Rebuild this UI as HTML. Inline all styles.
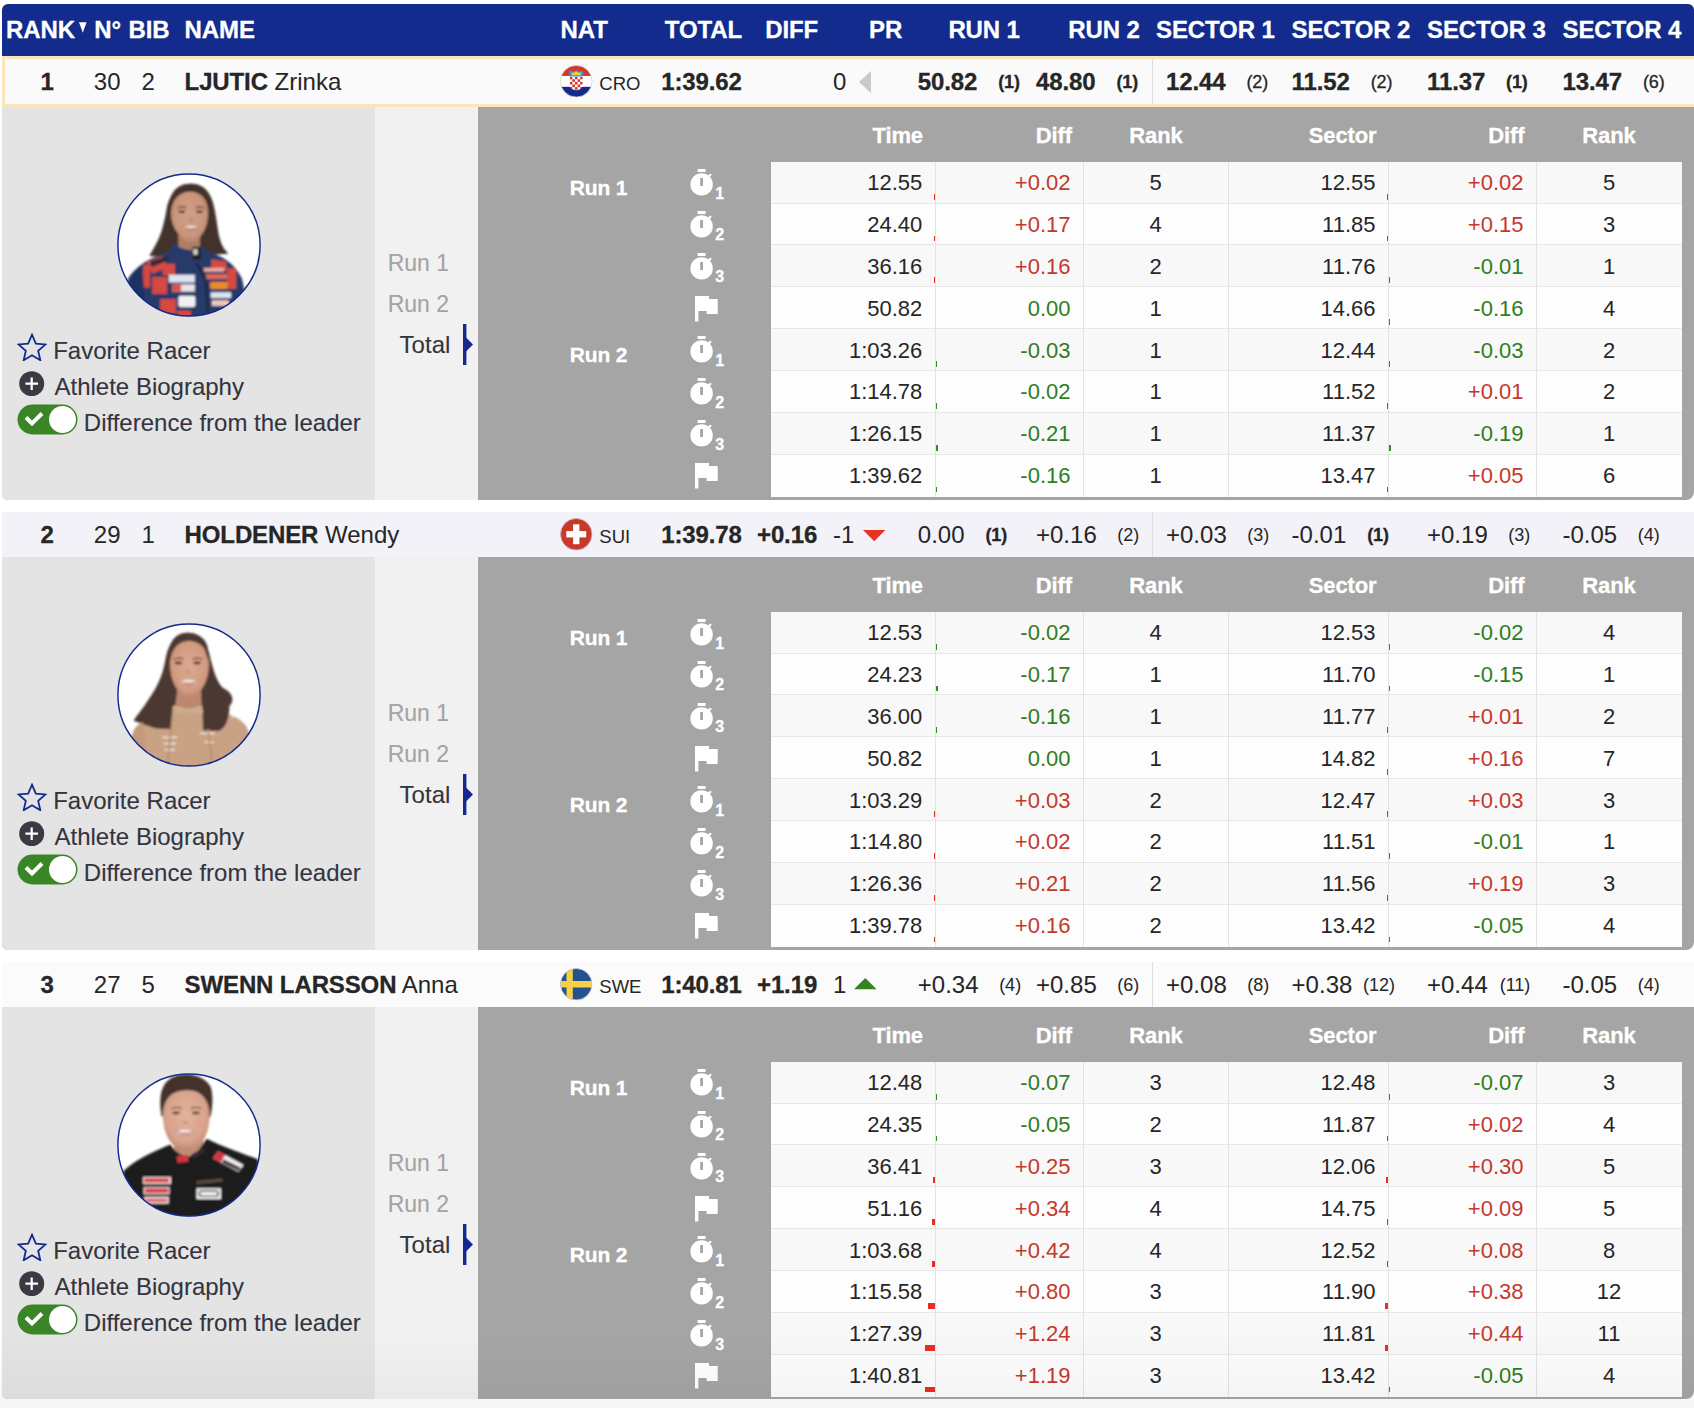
<!DOCTYPE html><html lang="en"><head><meta charset="utf-8"><title>Results</title><style>
html,body{margin:0;padding:0;}
body{width:1694px;height:1408px;overflow:hidden;background:#fff;position:relative;font-family:"Liberation Sans",sans-serif;color:#262626;}
.t{position:absolute;white-space:nowrap;line-height:1;}
.b{font-weight:bold;-webkit-text-stroke:0.3px;letter-spacing:-0.12px;}
.w{color:#fff;}
.abs{position:absolute;}
.hdr{left:2px;top:4px;width:1692px;height:52px;background:#122b8c;border-radius:6px 6px 0 0;}
.row{left:2px;width:1692px;height:45px;}
.row1{background:#fafafa;box-sizing:border-box;border:3px solid #fae6bd;border-right:none;height:51px;}
.row2{background:#f2f2f8;}
.row3{background:#fbfbfb;}
.det{left:2px;width:1692px;height:393px;border-radius:0 0 8px 6px;overflow:hidden;background:#a5a5a5;}
.lp{left:0;top:0;width:373px;height:100%;background:#e4e4e4;}
.mp{left:373px;top:0;width:103px;height:100%;background:#f1f1f1;}
.rk{display:inline-block;width:42.6px;text-align:right;font-size:18px;font-weight:normal;position:relative;top:-1.5px;}
.rk.b{font-weight:bold;-webkit-text-stroke:0.3px;letter-spacing:-0.12px;}
.red{color:#c4392c;}
.grn{color:#2f7d1f;}
.gry{color:#a3a3a3;-webkit-text-stroke:0.1px;}
.lt{color:#34343e;-webkit-text-stroke:0.1px;}
.sep{background:#dcdce0;width:1px;}
.cell{position:absolute;}
</style></head><body>
<div class="abs hdr"></div>
<span class="t b w" style="top:17.78px;font-size:24px;left:6.00px;">RANK</span>
<span class="t b w" style="top:17.78px;font-size:24px;left:94.30px;">N°</span>
<span class="t b w" style="top:17.78px;font-size:24px;left:128.50px;">BIB</span>
<span class="t b w" style="top:17.78px;font-size:24px;left:184.60px;">NAME</span>
<span class="t b w" style="top:17.78px;font-size:24px;left:560.50px;">NAT</span>
<span class="t b w" style="top:17.78px;font-size:24px;left:664.80px;">TOTAL</span>
<span class="t b w" style="top:17.78px;font-size:24px;left:765.20px;">DIFF</span>
<span class="t b w" style="top:17.78px;font-size:24px;left:869.00px;">PR</span>
<span class="t b w" style="top:17.78px;font-size:24px;left:948.40px;">RUN 1</span>
<span class="t b w" style="top:17.78px;font-size:24px;left:1068.30px;">RUN 2</span>
<span class="t b w" style="top:17.78px;font-size:24px;left:1156.00px;">SECTOR 1</span>
<span class="t b w" style="top:17.78px;font-size:24px;left:1291.60px;">SECTOR 2</span>
<span class="t b w" style="top:17.78px;font-size:24px;left:1427.00px;">SECTOR 3</span>
<span class="t b w" style="top:17.78px;font-size:24px;left:1562.50px;">SECTOR 4</span>
<svg class="abs" style="left:79.2px;top:22px" width="7.6" height="11.2" viewBox="0 0 8 11"><path d="M0 0H8L4 11Z" fill="#fff"/></svg>
<div class="abs row row1" style="top:56px"></div>
<span class="t b" style="top:69.58px;font-size:24px;left:-103.00px;width:300px;text-align:center;">1</span>
<span class="t " style="top:69.58px;font-size:24px;left:93.80px;">30</span>
<span class="t " style="top:69.58px;font-size:24px;left:141.50px;">2</span>
<span class="t " style="top:69.58px;font-size:24px;left:184.60px;"><b class="b">LJUTIC</b> Zrinka</span>
<svg class="abs" style="left:560.35px;top:65.1px" width="32.5" height="32.5" viewBox="0 0 32 32"><defs><clipPath id="c0"><circle cx="16" cy="16" r="15.6"/></clipPath><clipPath id="sh0"><path d="M9.6 11.5h12.8v8a6.4 5.4 0 0 1-12.8 0z"/></clipPath></defs><g clip-path="url(#c0)"><rect width="32" height="10.8" fill="#d5352b"/><rect y="10.8" width="32" height="10.7" fill="#fff"/><rect y="21.5" width="32" height="10.5" fill="#14298c"/><path d="M9.6 11.5h12.8v8a6.4 5.4 0 0 1-12.8 0z" fill="#fff"/><g fill="#d5352b" clip-path="url(#sh0)"><rect x="9.60" y="11.50" width="2.56" height="2.56"/><rect x="14.72" y="11.50" width="2.56" height="2.56"/><rect x="19.84" y="11.50" width="2.56" height="2.56"/><rect x="12.16" y="14.06" width="2.56" height="2.56"/><rect x="17.28" y="14.06" width="2.56" height="2.56"/><rect x="9.60" y="16.62" width="2.56" height="2.56"/><rect x="14.72" y="16.62" width="2.56" height="2.56"/><rect x="19.84" y="16.62" width="2.56" height="2.56"/><rect x="12.16" y="19.18" width="2.56" height="2.56"/><rect x="17.28" y="19.18" width="2.56" height="2.56"/><rect x="9.60" y="21.74" width="2.56" height="2.56"/><rect x="14.72" y="21.74" width="2.56" height="2.56"/><rect x="19.84" y="21.74" width="2.56" height="2.56"/><rect x="12.16" y="24.30" width="2.56" height="2.56"/><rect x="17.28" y="24.30" width="2.56" height="2.56"/></g><path d="M8.6 7l2-1.6 2.4 1 3-1.6 3 1.6 2.4-1 2 1.6-1.2 4.2H9.8z" fill="#3f8fd6"/><path d="M11 7.4l2 .3 3-1.2 3 1.2 2-.3-.6 2.6h-8.800z" fill="#f2c935"/></g><circle cx="16" cy="16" r="15.6" fill="none" stroke="#d4d4d4" stroke-width="0.8"/></svg>
<span class="t " style="top:75.44px;font-size:18.5px;left:599.30px;">CRO</span>
<span class="t b" style="top:69.58px;font-size:24px;left:661.20px;">1:39.62</span>
<span class="t " style="top:69.58px;font-size:24px;left:833.00px;">0</span>
<svg class="abs" style="left:859px;top:70.5px" width="12" height="22" viewBox="0 0 12 22"><path d="M12 0V22L0 11Z" fill="#c9c9c9"/></svg>
<span class="t b" style="top:69.58px;font-size:24px;left:917.80px;">50.82<span class="rk b">(1)</span></span>
<span class="t b" style="top:69.58px;font-size:24px;left:1036.00px;">48.80<span class="rk b">(1)</span></span>
<span class="t b" style="top:69.58px;font-size:24px;left:1166.00px;">12.44<span class="rk">(2)</span></span>
<span class="t b" style="top:69.58px;font-size:24px;left:1291.60px;">11.52<span class="rk">(2)</span></span>
<span class="t b" style="top:69.58px;font-size:24px;left:1427.00px;">11.37<span class="rk b">(1)</span></span>
<span class="t b" style="top:69.58px;font-size:24px;left:1562.50px;">13.47<span class="rk">(6)</span></span>
<div class="abs sep" style="left:1152px;top:59.0px;height:45px"></div>
<div class="abs det" style="top:107px;height:393px"><div class="abs lp"></div><div class="abs mp"></div></div>
<svg class="abs" style="left:117px;top:173px" width="144" height="144" viewBox="70 70 1268 1268"><defs><clipPath id="pc1"><circle cx="704" cy="704" r="628"/></clipPath><filter id="pb1" x="-5%" y="-5%" width="110%" height="110%"><feGaussianBlur stdDeviation="9"/></filter><radialGradient id="pf1" cx="0.5" cy="0.45" r="0.6"><stop offset="0" stop-color="#d3a087"/><stop offset="0.7" stop-color="#c8957b"/><stop offset="1" stop-color="#a97760"/></radialGradient></defs><circle cx="704" cy="704" r="630" fill="#fff"/><g clip-path="url(#pc1)"><g filter="url(#pb1)">
<path d="M720 165C600 165 530 260 505 400C480 540 450 640 400 720C380 760 365 780 355 800L560 810L1050 780C1010 740 985 700 965 610C950 520 940 420 915 330C880 220 820 165 720 165Z" fill="#43302a"/>
<path d="M170 1000C250 880 350 820 540 760L560 690C640 720 760 740 800 700L880 770C1000 800 1100 860 1170 1000L1260 1400L80 1400Z" fill="#263a69"/>
<path d="M610 600L800 600L800 730C760 760 660 750 610 720Z" fill="#b07e66"/>
<path d="M545 440C545 300 620 235 715 235C810 235 880 300 872 440C868 540 830 640 720 692C610 640 550 540 545 440Z" fill="url(#pf1)"/>
<path d="M540 380C560 270 640 225 715 222C800 222 870 260 880 370C905 270 860 170 720 165C570 165 525 280 540 380Z" fill="#43302a"/>
<ellipse cx="722" cy="550" rx="60" ry="15" fill="#f1e6e0"/><path d="M650 535C690 560 760 560 795 535C770 590 680 590 650 535Z" fill="#a8645a" opacity="0.6"/>
<ellipse cx="640" cy="412" rx="30" ry="11" fill="#46302a"/><ellipse cx="795" cy="412" rx="30" ry="11" fill="#46302a"/>
<path d="M600 380C620 365 660 365 680 378" stroke="#4a342c" stroke-width="10" fill="none"/><path d="M760 378C780 365 820 365 840 380" stroke="#4a342c" stroke-width="10" fill="none"/>
<ellipse cx="720" cy="480" rx="24" ry="14" fill="#b98268" opacity="0.7"/>
<g fill="#d54a41"><path d="M330 850L470 800L520 900L380 960Z"/><rect x="380" y="985" width="130" height="150"/><rect x="470" y="870" width="110" height="100"/><path d="M900 830L1030 850L1040 930L900 910Z"/><rect x="1040" y="910" width="80" height="180"/><rect x="450" y="1180" width="140" height="130"/><rect x="600" y="1280" width="120" height="60"/><rect x="300" y="880" width="60" height="200"/></g>
<path d="M170 1000C200 950 240 910 290 880L330 1330L100 1340Z" fill="#1f3160"/>
<rect x="735" y="720" width="70" height="110" fill="#1d1d22"/>
<rect x="742" y="740" width="38" height="50" fill="#d9d5cf"/>
<path d="M360 850L510 800L520 840L370 900Z" fill="#2b2f3d"/>
<rect x="525" y="965" width="230" height="70" fill="#dfe3ee"/><rect x="555" y="1050" width="200" height="65" fill="#efe3e6"/><rect x="555" y="1050" width="80" height="65" fill="#d9534c"/><rect x="610" y="1150" width="150" height="100" rx="20" fill="#f1f1f1"/>
<rect x="835" y="905" width="180" height="35" fill="#e8a9a4"/><rect x="855" y="960" width="185" height="45" fill="#e0665c"/><rect x="890" y="1030" width="155" height="62" rx="10" fill="#ea8b2c"/><rect x="895" y="1120" width="180" height="50" fill="#dfe5f3"/><rect x="905" y="1190" width="150" height="50" fill="#f0c9bd"/>
<path d="M770 860L850 1010L870 1300" stroke="#1a2037" stroke-width="16" fill="none"/>
</g></g><circle cx="704" cy="704" r="626" fill="none" stroke="#14298c" stroke-width="13"/></svg>
<svg class="abs" style="left:16.6px;top:333px" width="30" height="28.1" viewBox="0 0 32 30"><path d="M16 1.8l4.1 9.5 10.3 0.9-7.8 6.8 2.3 10.1-8.9-5.3-8.9 5.3 2.3-10.1-7.8-6.8 10.3-0.9z" fill="none" stroke="#14298c" stroke-width="1.9" stroke-linejoin="miter"/></svg>
<span class="t lt" style="top:338.58px;font-size:24px;left:53.20px;">Favorite Racer</span>
<svg class="abs" style="left:19.4px;top:370.5px" width="25.4" height="25.4" viewBox="0 0 25 25"><circle cx="12.5" cy="12.5" r="12.3" fill="#3a3a44"/><path d="M12.5 6.3v12.4M6.3 12.5h12.4" stroke="#fff" stroke-width="2.2"/></svg>
<span class="t lt" style="top:375.08px;font-size:24px;left:54.50px;">Athlete Biography</span>
<svg class="abs" style="left:16.5px;top:403.7px" width="61" height="31" viewBox="0 0 61 31"><rect x="0.5" y="0.5" width="60" height="30" rx="15" fill="#3a8526"/><circle cx="45.5" cy="15.5" r="13.5" fill="#fff"/><path d="M9 13.5l6 6 10-10" fill="none" stroke="#fff" stroke-width="4"/></svg>
<span class="t lt" style="top:411.08px;font-size:24px;left:83.80px;">Difference from the leader</span>
<span class="t gry" style="top:251.73px;font-size:23px;right:1245.00px;">Run 1</span>
<span class="t gry" style="top:292.93px;font-size:23px;right:1245.00px;">Run 2</span>
<span class="t lt" style="top:332.78px;font-size:24px;right:1243.70px;">Total</span>
<svg class="abs" style="left:463px;top:324px" width="11" height="42" viewBox="0 0 11 42"><rect x="0" y="0" width="3.4" height="41" fill="#14298c"/><path d="M3 13.5L10 20.5L3 27.5Z" fill="#14298c"/></svg>
<span class="t b w" style="top:125.38px;font-size:22px;right:771.00px;">Time</span>
<span class="t b w" style="top:125.38px;font-size:22px;right:622.00px;">Diff</span>
<span class="t b w" style="top:125.38px;font-size:22px;left:1006.00px;width:300px;text-align:center;">Rank</span>
<span class="t b w" style="top:125.38px;font-size:22px;right:317.50px;">Sector</span>
<span class="t b w" style="top:125.38px;font-size:22px;right:169.50px;">Diff</span>
<span class="t b w" style="top:125.38px;font-size:22px;left:1459.00px;width:300px;text-align:center;">Rank</span>
<div class="abs" style="left:771px;top:162px;width:911px;height:335px;background:#fdfdfd"></div>
<span class="t b w" style="top:176.62px;font-size:21px;left:569.70px;">Run 1</span>
<span class="t b w" style="top:343.98px;font-size:21px;left:569.70px;">Run 2</span>
<div class="abs" style="left:771px;top:162px;width:911px;height:42px;background:#f8f8f8"></div>
<div class="abs" style="left:771px;top:203px;width:911px;height:1px;background:#e7e7e7"></div>
<svg class="abs" style="left:690px;top:168.90px" width="24" height="30" viewBox="0 0 24 30"><rect x="7.6" y="0" width="8" height="3" fill="#fff"/><circle cx="11.6" cy="15.4" r="11.2" fill="#fff"/><path d="M18.4 8l2.6-2.8" stroke="#fff" stroke-width="2.2"/><rect x="10.2" y="9" width="2.8" height="8" fill="#a5a5a5"/></svg>
<span class="t b w" style="top:185.56px;font-size:16px;left:715.30px;">1</span>
<span class="t " style="top:172.18px;font-size:22px;right:771.70px;">12.55</span>
<span class="t red" style="top:172.18px;font-size:22px;right:623.50px;">+0.02</span>
<span class="t " style="top:172.18px;font-size:22px;left:1005.50px;width:300px;text-align:center;">5</span>
<span class="t " style="top:172.18px;font-size:22px;right:318.50px;">12.55</span>
<span class="t red" style="top:172.18px;font-size:22px;right:170.50px;">+0.02</span>
<span class="t " style="top:172.18px;font-size:22px;left:1459.00px;width:300px;text-align:center;">5</span>
<div class="abs" style="left:771px;top:244px;width:911px;height:1px;background:#e7e7e7"></div>
<svg class="abs" style="left:690px;top:210.74px" width="24" height="30" viewBox="0 0 24 30"><rect x="7.6" y="0" width="8" height="3" fill="#fff"/><circle cx="11.6" cy="15.4" r="11.2" fill="#fff"/><path d="M18.4 8l2.6-2.8" stroke="#fff" stroke-width="2.2"/><rect x="10.2" y="9" width="2.8" height="8" fill="#a5a5a5"/></svg>
<span class="t b w" style="top:227.40px;font-size:16px;left:715.30px;">2</span>
<span class="t " style="top:214.02px;font-size:22px;right:771.70px;">24.40</span>
<span class="t red" style="top:214.02px;font-size:22px;right:623.50px;">+0.17</span>
<span class="t " style="top:214.02px;font-size:22px;left:1005.50px;width:300px;text-align:center;">4</span>
<span class="t " style="top:214.02px;font-size:22px;right:318.50px;">11.85</span>
<span class="t red" style="top:214.02px;font-size:22px;right:170.50px;">+0.15</span>
<span class="t " style="top:214.02px;font-size:22px;left:1459.00px;width:300px;text-align:center;">3</span>
<div class="abs" style="left:771px;top:245px;width:911px;height:42px;background:#f8f8f8"></div>
<div class="abs" style="left:771px;top:286px;width:911px;height:1px;background:#e7e7e7"></div>
<svg class="abs" style="left:690px;top:252.58px" width="24" height="30" viewBox="0 0 24 30"><rect x="7.6" y="0" width="8" height="3" fill="#fff"/><circle cx="11.6" cy="15.4" r="11.2" fill="#fff"/><path d="M18.4 8l2.6-2.8" stroke="#fff" stroke-width="2.2"/><rect x="10.2" y="9" width="2.8" height="8" fill="#a5a5a5"/></svg>
<span class="t b w" style="top:269.24px;font-size:16px;left:715.30px;">3</span>
<span class="t " style="top:255.86px;font-size:22px;right:771.70px;">36.16</span>
<span class="t red" style="top:255.86px;font-size:22px;right:623.50px;">+0.16</span>
<span class="t " style="top:255.86px;font-size:22px;left:1005.50px;width:300px;text-align:center;">2</span>
<span class="t " style="top:255.86px;font-size:22px;right:318.50px;">11.76</span>
<span class="t grn" style="top:255.86px;font-size:22px;right:170.50px;">-0.01</span>
<span class="t " style="top:255.86px;font-size:22px;left:1459.00px;width:300px;text-align:center;">1</span>
<div class="abs" style="left:771px;top:328px;width:911px;height:1px;background:#e7e7e7"></div>
<svg class="abs" style="left:695px;top:296.12px" width="23.2" height="26.1" viewBox="0 0 24 27"><path d="M0 0H14.5V3H23.5V18.5H12V15.5H3.5V26.5H0Z" fill="#fff"/></svg>
<span class="t " style="top:297.70px;font-size:22px;right:771.70px;">50.82</span>
<span class="t grn" style="top:297.70px;font-size:22px;right:623.50px;">0.00</span>
<span class="t " style="top:297.70px;font-size:22px;left:1005.50px;width:300px;text-align:center;">1</span>
<span class="t " style="top:297.70px;font-size:22px;right:318.50px;">14.66</span>
<span class="t grn" style="top:297.70px;font-size:22px;right:170.50px;">-0.16</span>
<span class="t " style="top:297.70px;font-size:22px;left:1459.00px;width:300px;text-align:center;">4</span>
<div class="abs" style="left:771px;top:329px;width:911px;height:42px;background:#f8f8f8"></div>
<div class="abs" style="left:771px;top:370px;width:911px;height:1px;background:#e7e7e7"></div>
<svg class="abs" style="left:690px;top:336.26px" width="24" height="30" viewBox="0 0 24 30"><rect x="7.6" y="0" width="8" height="3" fill="#fff"/><circle cx="11.6" cy="15.4" r="11.2" fill="#fff"/><path d="M18.4 8l2.6-2.8" stroke="#fff" stroke-width="2.2"/><rect x="10.2" y="9" width="2.8" height="8" fill="#a5a5a5"/></svg>
<span class="t b w" style="top:352.92px;font-size:16px;left:715.30px;">1</span>
<span class="t " style="top:339.54px;font-size:22px;right:771.70px;">1:03.26</span>
<span class="t grn" style="top:339.54px;font-size:22px;right:623.50px;">-0.03</span>
<span class="t " style="top:339.54px;font-size:22px;left:1005.50px;width:300px;text-align:center;">1</span>
<span class="t " style="top:339.54px;font-size:22px;right:318.50px;">12.44</span>
<span class="t grn" style="top:339.54px;font-size:22px;right:170.50px;">-0.03</span>
<span class="t " style="top:339.54px;font-size:22px;left:1459.00px;width:300px;text-align:center;">2</span>
<div class="abs" style="left:771px;top:412px;width:911px;height:1px;background:#e7e7e7"></div>
<svg class="abs" style="left:690px;top:378.10px" width="24" height="30" viewBox="0 0 24 30"><rect x="7.6" y="0" width="8" height="3" fill="#fff"/><circle cx="11.6" cy="15.4" r="11.2" fill="#fff"/><path d="M18.4 8l2.6-2.8" stroke="#fff" stroke-width="2.2"/><rect x="10.2" y="9" width="2.8" height="8" fill="#a5a5a5"/></svg>
<span class="t b w" style="top:394.76px;font-size:16px;left:715.30px;">2</span>
<span class="t " style="top:381.38px;font-size:22px;right:771.70px;">1:14.78</span>
<span class="t grn" style="top:381.38px;font-size:22px;right:623.50px;">-0.02</span>
<span class="t " style="top:381.38px;font-size:22px;left:1005.50px;width:300px;text-align:center;">1</span>
<span class="t " style="top:381.38px;font-size:22px;right:318.50px;">11.52</span>
<span class="t red" style="top:381.38px;font-size:22px;right:170.50px;">+0.01</span>
<span class="t " style="top:381.38px;font-size:22px;left:1459.00px;width:300px;text-align:center;">2</span>
<div class="abs" style="left:771px;top:413px;width:911px;height:42px;background:#f8f8f8"></div>
<div class="abs" style="left:771px;top:454px;width:911px;height:1px;background:#e7e7e7"></div>
<svg class="abs" style="left:690px;top:419.94px" width="24" height="30" viewBox="0 0 24 30"><rect x="7.6" y="0" width="8" height="3" fill="#fff"/><circle cx="11.6" cy="15.4" r="11.2" fill="#fff"/><path d="M18.4 8l2.6-2.8" stroke="#fff" stroke-width="2.2"/><rect x="10.2" y="9" width="2.8" height="8" fill="#a5a5a5"/></svg>
<span class="t b w" style="top:436.60px;font-size:16px;left:715.30px;">3</span>
<span class="t " style="top:423.22px;font-size:22px;right:771.70px;">1:26.15</span>
<span class="t grn" style="top:423.22px;font-size:22px;right:623.50px;">-0.21</span>
<span class="t " style="top:423.22px;font-size:22px;left:1005.50px;width:300px;text-align:center;">1</span>
<span class="t " style="top:423.22px;font-size:22px;right:318.50px;">11.37</span>
<span class="t grn" style="top:423.22px;font-size:22px;right:170.50px;">-0.19</span>
<span class="t " style="top:423.22px;font-size:22px;left:1459.00px;width:300px;text-align:center;">1</span>
<svg class="abs" style="left:695px;top:463.48px" width="23.2" height="26.1" viewBox="0 0 24 27"><path d="M0 0H14.5V3H23.5V18.5H12V15.5H3.5V26.5H0Z" fill="#fff"/></svg>
<span class="t " style="top:465.06px;font-size:22px;right:771.70px;">1:39.62</span>
<span class="t grn" style="top:465.06px;font-size:22px;right:623.50px;">-0.16</span>
<span class="t " style="top:465.06px;font-size:22px;left:1005.50px;width:300px;text-align:center;">1</span>
<span class="t " style="top:465.06px;font-size:22px;right:318.50px;">13.47</span>
<span class="t red" style="top:465.06px;font-size:22px;right:170.50px;">+0.05</span>
<span class="t " style="top:465.06px;font-size:22px;left:1459.00px;width:300px;text-align:center;">6</span>
<div class="abs" style="left:935px;top:162px;width:1px;height:335px;background:#e3e3e3"></div>
<div class="abs" style="left:1083px;top:162px;width:1px;height:335px;background:#e3e3e3"></div>
<div class="abs" style="left:1228px;top:162px;width:1px;height:335px;background:#e3e3e3"></div>
<div class="abs" style="left:1388px;top:162px;width:1px;height:335px;background:#e3e3e3"></div>
<div class="abs" style="left:1536px;top:162px;width:1px;height:335px;background:#e3e3e3"></div>
<div class="abs" style="left:934.3px;top:193.80px;width:1.0px;height:5.8px;background:#e62e22"></div>
<div class="abs" style="left:1387.3px;top:193.80px;width:1.0px;height:5.8px;background:#e62e22"></div>
<div class="abs" style="left:933.8px;top:235.64px;width:1.5px;height:5.8px;background:#e62e22"></div>
<div class="abs" style="left:1387.0px;top:235.64px;width:1.3px;height:5.8px;background:#e62e22"></div>
<div class="abs" style="left:933.9px;top:277.48px;width:1.4px;height:5.8px;background:#e62e22"></div>
<div class="abs" style="left:1389.0px;top:277.48px;width:1.0px;height:5.8px;background:#358a25"></div>
<div class="abs" style="left:1389.0px;top:319.32px;width:1.4px;height:5.8px;background:#358a25"></div>
<div class="abs" style="left:936.0px;top:361.16px;width:1.0px;height:5.8px;background:#358a25"></div>
<div class="abs" style="left:1389.0px;top:361.16px;width:1.0px;height:5.8px;background:#358a25"></div>
<div class="abs" style="left:936.0px;top:403.00px;width:1.0px;height:5.8px;background:#358a25"></div>
<div class="abs" style="left:1387.3px;top:403.00px;width:1.0px;height:5.8px;background:#e62e22"></div>
<div class="abs" style="left:936.0px;top:444.84px;width:1.8px;height:5.8px;background:#358a25"></div>
<div class="abs" style="left:1389.0px;top:444.84px;width:1.6px;height:5.8px;background:#358a25"></div>
<div class="abs" style="left:936.0px;top:486.68px;width:1.4px;height:5.8px;background:#358a25"></div>
<div class="abs" style="left:1387.3px;top:486.68px;width:1.0px;height:5.8px;background:#e62e22"></div>
<div class="abs row row2" style="top:512px"></div>
<span class="t b" style="top:522.58px;font-size:24px;left:-103.00px;width:300px;text-align:center;">2</span>
<span class="t " style="top:522.58px;font-size:24px;left:93.80px;">29</span>
<span class="t " style="top:522.58px;font-size:24px;left:141.50px;">1</span>
<span class="t " style="top:522.58px;font-size:24px;left:184.60px;"><b class="b">HOLDENER</b> Wendy</span>
<svg class="abs" style="left:560.35px;top:518.1px" width="32.5" height="32.5" viewBox="0 0 32 32"><circle cx="16" cy="16" r="15.5" fill="#c8392b"/><rect x="12.9" y="6.2" width="6.2" height="19.6" fill="#fff"/><rect x="6.2" y="12.9" width="19.6" height="6.2" fill="#fff"/><circle cx="16" cy="16" r="15.5" fill="none" stroke="#c9bcbc" stroke-width="0.8"/></svg>
<span class="t " style="top:528.44px;font-size:18.5px;left:599.30px;">SUI</span>
<span class="t b" style="top:522.58px;font-size:24px;left:661.20px;">1:39.78</span>
<span class="t b" style="top:522.58px;font-size:24px;left:757.00px;">+0.16</span>
<span class="t " style="top:522.58px;font-size:24px;left:833.00px;">-1</span>
<svg class="abs" style="left:863.3px;top:530.3px" width="22.4" height="11.2" viewBox="0 0 22 11"><path d="M0 0H22L11 11Z" fill="#e63222"/></svg>
<span class="t " style="top:522.58px;font-size:24px;left:917.80px;">0.00<span class="rk b">(1)</span></span>
<span class="t " style="top:522.58px;font-size:24px;left:1036.00px;">+0.16<span class="rk">(2)</span></span>
<span class="t " style="top:522.58px;font-size:24px;left:1166.00px;">+0.03<span class="rk">(3)</span></span>
<span class="t " style="top:522.58px;font-size:24px;left:1291.60px;">-0.01<span class="rk b">(1)</span></span>
<span class="t " style="top:522.58px;font-size:24px;left:1427.00px;">+0.19<span class="rk">(3)</span></span>
<span class="t " style="top:522.58px;font-size:24px;left:1562.50px;">-0.05<span class="rk">(4)</span></span>
<div class="abs sep" style="left:1152px;top:512.0px;height:45px"></div>
<div class="abs det" style="top:557px;height:393px"><div class="abs lp"></div><div class="abs mp"></div></div>
<svg class="abs" style="left:117px;top:623px" width="144" height="144" viewBox="70 70 1268 1268"><defs><clipPath id="pc2"><circle cx="704" cy="704" r="628"/></clipPath><filter id="pb2" x="-5%" y="-5%" width="110%" height="110%"><feGaussianBlur stdDeviation="9"/></filter><radialGradient id="pf2" cx="0.5" cy="0.45" r="0.6"><stop offset="0" stop-color="#ddaa90"/><stop offset="0.7" stop-color="#d29b81"/><stop offset="1" stop-color="#b07c64"/></radialGradient></defs><circle cx="704" cy="704" r="630" fill="#fff"/><g clip-path="url(#pc2)"><g filter="url(#pb2)">
<path d="M205 1050C230 960 350 900 580 790C650 800 750 800 800 790C1000 840 1180 900 1225 1010L1320 1400L90 1400Z" fill="#c8a283"/>
<path d="M690 155C580 155 520 260 495 400C470 540 420 640 350 740C300 820 250 880 215 930C300 960 380 990 420 1000L960 1020C1040 1000 1060 880 1060 800C1110 760 1090 680 1000 640C940 580 910 450 880 330C850 220 790 155 690 155Z" fill="#4c3830"/>
<path d="M560 800L820 800L830 1060L540 1060Z" fill="#c8a283"/>
<path d="M600 660L810 660L815 790C750 830 650 830 585 790Z" fill="#bb876f"/>
<path d="M575 790C650 835 750 835 815 790L830 870C740 850 650 850 560 870Z" fill="#cfab8e"/>
<path d="M536 440C536 300 610 228 705 228C800 228 880 300 880 440C878 570 825 690 705 738C590 690 538 570 536 440Z" fill="url(#pf2)"/>
<path d="M535 390C555 260 630 215 700 212C785 212 850 260 866 390C895 280 850 160 690 155C560 155 510 280 535 390Z" fill="#4c3830"/>
<ellipse cx="700" cy="590" rx="76" ry="20" fill="#f3e8e4"/><path d="M615 572C660 598 740 598 785 572C755 635 650 635 615 572Z" fill="#b0675e" opacity="0.55"/>
<ellipse cx="610" cy="422" rx="32" ry="12" fill="#4b3229"/><ellipse cx="775" cy="422" rx="32" ry="12" fill="#4b3229"/>
<path d="M570 392C595 375 640 375 655 390" stroke="#4f382e" stroke-width="10" fill="none"/><path d="M735 390C755 375 800 375 820 392" stroke="#4f382e" stroke-width="10" fill="none"/>
<ellipse cx="695" cy="500" rx="24" ry="14" fill="#bf8970" opacity="0.7"/>
<g fill="#efe6dc"><rect x="470" y="1070" width="130" height="14"/><rect x="480" y="1125" width="110" height="14"/><rect x="490" y="1180" width="90" height="14"/><rect x="800" y="1035" width="130" height="14"/><rect x="840" y="1115" width="80" height="12"/><rect x="1075" y="885" width="40" height="14"/></g>
<path d="M565 820L515 1300" stroke="#b48c6e" stroke-width="14" fill="none"/><path d="M870 1000L905 1280" stroke="#b48c6e" stroke-width="14" fill="none"/>
<path d="M205 1050C215 1000 250 960 300 935L330 1340L100 1340Z" fill="#bd9878" opacity="0.7"/>
</g></g><circle cx="704" cy="704" r="626" fill="none" stroke="#14298c" stroke-width="13"/></svg>
<svg class="abs" style="left:16.6px;top:783px" width="30" height="28.1" viewBox="0 0 32 30"><path d="M16 1.8l4.1 9.5 10.3 0.9-7.8 6.8 2.3 10.1-8.9-5.3-8.9 5.3 2.3-10.1-7.8-6.8 10.3-0.9z" fill="none" stroke="#14298c" stroke-width="1.9" stroke-linejoin="miter"/></svg>
<span class="t lt" style="top:788.58px;font-size:24px;left:53.20px;">Favorite Racer</span>
<svg class="abs" style="left:19.4px;top:820.5px" width="25.4" height="25.4" viewBox="0 0 25 25"><circle cx="12.5" cy="12.5" r="12.3" fill="#3a3a44"/><path d="M12.5 6.3v12.4M6.3 12.5h12.4" stroke="#fff" stroke-width="2.2"/></svg>
<span class="t lt" style="top:825.08px;font-size:24px;left:54.50px;">Athlete Biography</span>
<svg class="abs" style="left:16.5px;top:853.7px" width="61" height="31" viewBox="0 0 61 31"><rect x="0.5" y="0.5" width="60" height="30" rx="15" fill="#3a8526"/><circle cx="45.5" cy="15.5" r="13.5" fill="#fff"/><path d="M9 13.5l6 6 10-10" fill="none" stroke="#fff" stroke-width="4"/></svg>
<span class="t lt" style="top:861.08px;font-size:24px;left:83.80px;">Difference from the leader</span>
<span class="t gry" style="top:701.73px;font-size:23px;right:1245.00px;">Run 1</span>
<span class="t gry" style="top:742.93px;font-size:23px;right:1245.00px;">Run 2</span>
<span class="t lt" style="top:782.78px;font-size:24px;right:1243.70px;">Total</span>
<svg class="abs" style="left:463px;top:774px" width="11" height="42" viewBox="0 0 11 42"><rect x="0" y="0" width="3.4" height="41" fill="#14298c"/><path d="M3 13.5L10 20.5L3 27.5Z" fill="#14298c"/></svg>
<span class="t b w" style="top:575.38px;font-size:22px;right:771.00px;">Time</span>
<span class="t b w" style="top:575.38px;font-size:22px;right:622.00px;">Diff</span>
<span class="t b w" style="top:575.38px;font-size:22px;left:1006.00px;width:300px;text-align:center;">Rank</span>
<span class="t b w" style="top:575.38px;font-size:22px;right:317.50px;">Sector</span>
<span class="t b w" style="top:575.38px;font-size:22px;right:169.50px;">Diff</span>
<span class="t b w" style="top:575.38px;font-size:22px;left:1459.00px;width:300px;text-align:center;">Rank</span>
<div class="abs" style="left:771px;top:612px;width:911px;height:335px;background:#fdfdfd"></div>
<span class="t b w" style="top:626.62px;font-size:21px;left:569.70px;">Run 1</span>
<span class="t b w" style="top:793.98px;font-size:21px;left:569.70px;">Run 2</span>
<div class="abs" style="left:771px;top:612px;width:911px;height:42px;background:#f8f8f8"></div>
<div class="abs" style="left:771px;top:653px;width:911px;height:1px;background:#e7e7e7"></div>
<svg class="abs" style="left:690px;top:618.90px" width="24" height="30" viewBox="0 0 24 30"><rect x="7.6" y="0" width="8" height="3" fill="#fff"/><circle cx="11.6" cy="15.4" r="11.2" fill="#fff"/><path d="M18.4 8l2.6-2.8" stroke="#fff" stroke-width="2.2"/><rect x="10.2" y="9" width="2.8" height="8" fill="#a5a5a5"/></svg>
<span class="t b w" style="top:635.56px;font-size:16px;left:715.30px;">1</span>
<span class="t " style="top:622.18px;font-size:22px;right:771.70px;">12.53</span>
<span class="t grn" style="top:622.18px;font-size:22px;right:623.50px;">-0.02</span>
<span class="t " style="top:622.18px;font-size:22px;left:1005.50px;width:300px;text-align:center;">4</span>
<span class="t " style="top:622.18px;font-size:22px;right:318.50px;">12.53</span>
<span class="t grn" style="top:622.18px;font-size:22px;right:170.50px;">-0.02</span>
<span class="t " style="top:622.18px;font-size:22px;left:1459.00px;width:300px;text-align:center;">4</span>
<div class="abs" style="left:771px;top:694px;width:911px;height:1px;background:#e7e7e7"></div>
<svg class="abs" style="left:690px;top:660.74px" width="24" height="30" viewBox="0 0 24 30"><rect x="7.6" y="0" width="8" height="3" fill="#fff"/><circle cx="11.6" cy="15.4" r="11.2" fill="#fff"/><path d="M18.4 8l2.6-2.8" stroke="#fff" stroke-width="2.2"/><rect x="10.2" y="9" width="2.8" height="8" fill="#a5a5a5"/></svg>
<span class="t b w" style="top:677.40px;font-size:16px;left:715.30px;">2</span>
<span class="t " style="top:664.02px;font-size:22px;right:771.70px;">24.23</span>
<span class="t grn" style="top:664.02px;font-size:22px;right:623.50px;">-0.17</span>
<span class="t " style="top:664.02px;font-size:22px;left:1005.50px;width:300px;text-align:center;">1</span>
<span class="t " style="top:664.02px;font-size:22px;right:318.50px;">11.70</span>
<span class="t grn" style="top:664.02px;font-size:22px;right:170.50px;">-0.15</span>
<span class="t " style="top:664.02px;font-size:22px;left:1459.00px;width:300px;text-align:center;">1</span>
<div class="abs" style="left:771px;top:695px;width:911px;height:42px;background:#f8f8f8"></div>
<div class="abs" style="left:771px;top:736px;width:911px;height:1px;background:#e7e7e7"></div>
<svg class="abs" style="left:690px;top:702.58px" width="24" height="30" viewBox="0 0 24 30"><rect x="7.6" y="0" width="8" height="3" fill="#fff"/><circle cx="11.6" cy="15.4" r="11.2" fill="#fff"/><path d="M18.4 8l2.6-2.8" stroke="#fff" stroke-width="2.2"/><rect x="10.2" y="9" width="2.8" height="8" fill="#a5a5a5"/></svg>
<span class="t b w" style="top:719.24px;font-size:16px;left:715.30px;">3</span>
<span class="t " style="top:705.86px;font-size:22px;right:771.70px;">36.00</span>
<span class="t grn" style="top:705.86px;font-size:22px;right:623.50px;">-0.16</span>
<span class="t " style="top:705.86px;font-size:22px;left:1005.50px;width:300px;text-align:center;">1</span>
<span class="t " style="top:705.86px;font-size:22px;right:318.50px;">11.77</span>
<span class="t red" style="top:705.86px;font-size:22px;right:170.50px;">+0.01</span>
<span class="t " style="top:705.86px;font-size:22px;left:1459.00px;width:300px;text-align:center;">2</span>
<div class="abs" style="left:771px;top:778px;width:911px;height:1px;background:#e7e7e7"></div>
<svg class="abs" style="left:695px;top:746.12px" width="23.2" height="26.1" viewBox="0 0 24 27"><path d="M0 0H14.5V3H23.5V18.5H12V15.5H3.5V26.5H0Z" fill="#fff"/></svg>
<span class="t " style="top:747.70px;font-size:22px;right:771.70px;">50.82</span>
<span class="t grn" style="top:747.70px;font-size:22px;right:623.50px;">0.00</span>
<span class="t " style="top:747.70px;font-size:22px;left:1005.50px;width:300px;text-align:center;">1</span>
<span class="t " style="top:747.70px;font-size:22px;right:318.50px;">14.82</span>
<span class="t red" style="top:747.70px;font-size:22px;right:170.50px;">+0.16</span>
<span class="t " style="top:747.70px;font-size:22px;left:1459.00px;width:300px;text-align:center;">7</span>
<div class="abs" style="left:771px;top:779px;width:911px;height:42px;background:#f8f8f8"></div>
<div class="abs" style="left:771px;top:820px;width:911px;height:1px;background:#e7e7e7"></div>
<svg class="abs" style="left:690px;top:786.26px" width="24" height="30" viewBox="0 0 24 30"><rect x="7.6" y="0" width="8" height="3" fill="#fff"/><circle cx="11.6" cy="15.4" r="11.2" fill="#fff"/><path d="M18.4 8l2.6-2.8" stroke="#fff" stroke-width="2.2"/><rect x="10.2" y="9" width="2.8" height="8" fill="#a5a5a5"/></svg>
<span class="t b w" style="top:802.92px;font-size:16px;left:715.30px;">1</span>
<span class="t " style="top:789.54px;font-size:22px;right:771.70px;">1:03.29</span>
<span class="t red" style="top:789.54px;font-size:22px;right:623.50px;">+0.03</span>
<span class="t " style="top:789.54px;font-size:22px;left:1005.50px;width:300px;text-align:center;">2</span>
<span class="t " style="top:789.54px;font-size:22px;right:318.50px;">12.47</span>
<span class="t red" style="top:789.54px;font-size:22px;right:170.50px;">+0.03</span>
<span class="t " style="top:789.54px;font-size:22px;left:1459.00px;width:300px;text-align:center;">3</span>
<div class="abs" style="left:771px;top:862px;width:911px;height:1px;background:#e7e7e7"></div>
<svg class="abs" style="left:690px;top:828.10px" width="24" height="30" viewBox="0 0 24 30"><rect x="7.6" y="0" width="8" height="3" fill="#fff"/><circle cx="11.6" cy="15.4" r="11.2" fill="#fff"/><path d="M18.4 8l2.6-2.8" stroke="#fff" stroke-width="2.2"/><rect x="10.2" y="9" width="2.8" height="8" fill="#a5a5a5"/></svg>
<span class="t b w" style="top:844.76px;font-size:16px;left:715.30px;">2</span>
<span class="t " style="top:831.38px;font-size:22px;right:771.70px;">1:14.80</span>
<span class="t red" style="top:831.38px;font-size:22px;right:623.50px;">+0.02</span>
<span class="t " style="top:831.38px;font-size:22px;left:1005.50px;width:300px;text-align:center;">2</span>
<span class="t " style="top:831.38px;font-size:22px;right:318.50px;">11.51</span>
<span class="t grn" style="top:831.38px;font-size:22px;right:170.50px;">-0.01</span>
<span class="t " style="top:831.38px;font-size:22px;left:1459.00px;width:300px;text-align:center;">1</span>
<div class="abs" style="left:771px;top:863px;width:911px;height:42px;background:#f8f8f8"></div>
<div class="abs" style="left:771px;top:904px;width:911px;height:1px;background:#e7e7e7"></div>
<svg class="abs" style="left:690px;top:869.94px" width="24" height="30" viewBox="0 0 24 30"><rect x="7.6" y="0" width="8" height="3" fill="#fff"/><circle cx="11.6" cy="15.4" r="11.2" fill="#fff"/><path d="M18.4 8l2.6-2.8" stroke="#fff" stroke-width="2.2"/><rect x="10.2" y="9" width="2.8" height="8" fill="#a5a5a5"/></svg>
<span class="t b w" style="top:886.60px;font-size:16px;left:715.30px;">3</span>
<span class="t " style="top:873.22px;font-size:22px;right:771.70px;">1:26.36</span>
<span class="t red" style="top:873.22px;font-size:22px;right:623.50px;">+0.21</span>
<span class="t " style="top:873.22px;font-size:22px;left:1005.50px;width:300px;text-align:center;">2</span>
<span class="t " style="top:873.22px;font-size:22px;right:318.50px;">11.56</span>
<span class="t red" style="top:873.22px;font-size:22px;right:170.50px;">+0.19</span>
<span class="t " style="top:873.22px;font-size:22px;left:1459.00px;width:300px;text-align:center;">3</span>
<svg class="abs" style="left:695px;top:913.48px" width="23.2" height="26.1" viewBox="0 0 24 27"><path d="M0 0H14.5V3H23.5V18.5H12V15.5H3.5V26.5H0Z" fill="#fff"/></svg>
<span class="t " style="top:915.06px;font-size:22px;right:771.70px;">1:39.78</span>
<span class="t red" style="top:915.06px;font-size:22px;right:623.50px;">+0.16</span>
<span class="t " style="top:915.06px;font-size:22px;left:1005.50px;width:300px;text-align:center;">2</span>
<span class="t " style="top:915.06px;font-size:22px;right:318.50px;">13.42</span>
<span class="t grn" style="top:915.06px;font-size:22px;right:170.50px;">-0.05</span>
<span class="t " style="top:915.06px;font-size:22px;left:1459.00px;width:300px;text-align:center;">4</span>
<div class="abs" style="left:935px;top:612px;width:1px;height:335px;background:#e3e3e3"></div>
<div class="abs" style="left:1083px;top:612px;width:1px;height:335px;background:#e3e3e3"></div>
<div class="abs" style="left:1228px;top:612px;width:1px;height:335px;background:#e3e3e3"></div>
<div class="abs" style="left:1388px;top:612px;width:1px;height:335px;background:#e3e3e3"></div>
<div class="abs" style="left:1536px;top:612px;width:1px;height:335px;background:#e3e3e3"></div>
<div class="abs" style="left:936.0px;top:643.80px;width:1.0px;height:5.8px;background:#358a25"></div>
<div class="abs" style="left:1389.0px;top:643.80px;width:1.0px;height:5.8px;background:#358a25"></div>
<div class="abs" style="left:936.0px;top:685.64px;width:1.5px;height:5.8px;background:#358a25"></div>
<div class="abs" style="left:1389.0px;top:685.64px;width:1.3px;height:5.8px;background:#358a25"></div>
<div class="abs" style="left:936.0px;top:727.48px;width:1.4px;height:5.8px;background:#358a25"></div>
<div class="abs" style="left:1387.3px;top:727.48px;width:1.0px;height:5.8px;background:#e62e22"></div>
<div class="abs" style="left:1386.9px;top:769.32px;width:1.4px;height:5.8px;background:#e62e22"></div>
<div class="abs" style="left:934.3px;top:811.16px;width:1.0px;height:5.8px;background:#e62e22"></div>
<div class="abs" style="left:1387.3px;top:811.16px;width:1.0px;height:5.8px;background:#e62e22"></div>
<div class="abs" style="left:934.3px;top:853.00px;width:1.0px;height:5.8px;background:#e62e22"></div>
<div class="abs" style="left:1389.0px;top:853.00px;width:1.0px;height:5.8px;background:#358a25"></div>
<div class="abs" style="left:933.5px;top:894.84px;width:1.8px;height:5.8px;background:#e62e22"></div>
<div class="abs" style="left:1386.7px;top:894.84px;width:1.6px;height:5.8px;background:#e62e22"></div>
<div class="abs" style="left:933.9px;top:936.68px;width:1.4px;height:5.8px;background:#e62e22"></div>
<div class="abs" style="left:1389.0px;top:936.68px;width:1.0px;height:5.8px;background:#358a25"></div>
<div class="abs row row3" style="top:962px"></div>
<span class="t b" style="top:972.58px;font-size:24px;left:-103.00px;width:300px;text-align:center;">3</span>
<span class="t " style="top:972.58px;font-size:24px;left:93.80px;">27</span>
<span class="t " style="top:972.58px;font-size:24px;left:141.50px;">5</span>
<span class="t " style="top:972.58px;font-size:24px;left:184.60px;"><b class="b">SWENN LARSSON</b> Anna</span>
<svg class="abs" style="left:560.35px;top:968.1px" width="32.5" height="32.5" viewBox="0 0 32 32"><defs><clipPath id="c2"><circle cx="16" cy="16" r="15.5"/></clipPath></defs><g clip-path="url(#c2)"><rect width="32" height="32" fill="#23528f"/><rect x="6.4" width="6.2" height="32" fill="#f7cf45"/><rect y="12.8" width="32" height="6.4" fill="#f7cf45"/></g><circle cx="16" cy="16" r="15.5" fill="none" stroke="#cfcfd4" stroke-width="0.8"/></svg>
<span class="t " style="top:978.44px;font-size:18.5px;left:599.30px;">SWE</span>
<span class="t b" style="top:972.58px;font-size:24px;left:661.20px;">1:40.81</span>
<span class="t b" style="top:972.58px;font-size:24px;left:757.00px;">+1.19</span>
<span class="t " style="top:972.58px;font-size:24px;left:833.00px;">1</span>
<svg class="abs" style="left:854.2px;top:978.2px" width="22.6" height="11.4" viewBox="0 0 22 11"><path d="M0 11H22L11 0Z" fill="#39831f"/></svg>
<span class="t " style="top:972.58px;font-size:24px;left:917.80px;">+0.34<span class="rk">(4)</span></span>
<span class="t " style="top:972.58px;font-size:24px;left:1036.00px;">+0.85<span class="rk">(6)</span></span>
<span class="t " style="top:972.58px;font-size:24px;left:1166.00px;">+0.08<span class="rk">(8)</span></span>
<span class="t " style="top:972.58px;font-size:24px;left:1291.60px;">+0.38<span class="rk">(12)</span></span>
<span class="t " style="top:972.58px;font-size:24px;left:1427.00px;">+0.44<span class="rk">(11)</span></span>
<span class="t " style="top:972.58px;font-size:24px;left:1562.50px;">-0.05<span class="rk">(4)</span></span>
<div class="abs sep" style="left:1152px;top:962.0px;height:45px"></div>
<div class="abs det" style="top:1007px;height:392px"><div class="abs lp"></div><div class="abs mp"></div></div>
<svg class="abs" style="left:117px;top:1073px" width="144" height="144" viewBox="70 70 1268 1268"><defs><clipPath id="pc3"><circle cx="704" cy="704" r="628"/></clipPath><filter id="pb3" x="-5%" y="-5%" width="110%" height="110%"><feGaussianBlur stdDeviation="9"/></filter><radialGradient id="pf3" cx="0.5" cy="0.45" r="0.6"><stop offset="0" stop-color="#e4b29b"/><stop offset="0.7" stop-color="#d9a48d"/><stop offset="1" stop-color="#b98570"/></radialGradient></defs><circle cx="704" cy="704" r="630" fill="#fff"/><g clip-path="url(#pc3)"><g filter="url(#pb3)">
<path d="M462 450C428 250 470 130 600 92C700 72 850 90 898 200C922 300 905 400 892 460Z" fill="#43302a"/>
<path d="M570 660L830 660L830 800L570 800Z" fill="#c08c76"/>
<path d="M474 440C474 300 560 215 680 215C800 215 886 300 886 440C884 560 850 660 790 710C740 752 620 752 575 710C510 660 476 560 474 440Z" fill="url(#pf3)"/>
<path d="M470 360C505 250 600 222 690 222C770 222 860 250 892 360C915 200 850 92 690 82C520 82 448 200 470 360Z" fill="#43302a"/>
<path d="M130 930C250 820 400 760 540 700C600 800 700 820 760 790L860 650C1000 720 1200 790 1310 830L1400 1400L40 1400Z" fill="#1b1a1d"/>
<ellipse cx="668" cy="592" rx="72" ry="22" fill="#f5ebe8"/><path d="M585 570C630 600 710 600 752 570C725 640 620 640 585 570Z" fill="#b56a62" opacity="0.55"/>
<ellipse cx="590" cy="422" rx="34" ry="12" fill="#59473f"/><ellipse cx="765" cy="422" rx="34" ry="12" fill="#59473f"/>
<path d="M545 385C575 368 620 368 640 384" stroke="#6a4f42" stroke-width="11" fill="none"/><path d="M720 384C740 368 790 368 815 385" stroke="#6a4f42" stroke-width="11" fill="none"/>
<ellipse cx="672" cy="505" rx="28" ry="15" fill="#c48f78" opacity="0.7"/>
<ellipse cx="560" cy="510" rx="40" ry="30" fill="#e0a08c" opacity="0.6"/><ellipse cx="800" cy="510" rx="40" ry="30" fill="#e0a08c" opacity="0.6"/>
<rect x="598" y="795" width="100" height="62" rx="8" fill="#cf3540" transform="rotate(-8 648 826)"/>
<path d="M720 790L830 730L850 760L750 830Z" fill="#2a2a38"/>
<path d="M960 760L1185 880L1140 940L915 820Z" fill="#f4f1f1"/><path d="M960 760L1022 793L985 855L915 820Z" fill="#d8313c"/>
<path d="M1010 830L1160 905L1140 930L995 858Z" fill="#3a3436"/>
<rect x="300" y="985" width="245" height="62" fill="#f3dcdc"/><rect x="312" y="997" width="215" height="36" fill="#d5404a"/>
<rect x="305" y="1075" width="228" height="64" fill="#f3dcdc"/><rect x="317" y="1087" width="205" height="40" fill="#d5404a"/>
<rect x="310" y="1160" width="215" height="60" fill="#f7eeee"/><rect x="322" y="1176" width="190" height="30" fill="#de5660"/>
<rect x="770" y="1085" width="215" height="95" fill="#f4f4f4"/><rect x="795" y="1108" width="165" height="48" rx="22" fill="none" stroke="#222" stroke-width="12"/>
<rect x="770" y="1010" width="230" height="28" fill="#5a4d42" transform="rotate(-6 885 1024)"/>
</g></g><circle cx="704" cy="704" r="626" fill="none" stroke="#14298c" stroke-width="13"/></svg>
<svg class="abs" style="left:16.6px;top:1233px" width="30" height="28.1" viewBox="0 0 32 30"><path d="M16 1.8l4.1 9.5 10.3 0.9-7.8 6.8 2.3 10.1-8.9-5.3-8.9 5.3 2.3-10.1-7.8-6.8 10.3-0.9z" fill="none" stroke="#14298c" stroke-width="1.9" stroke-linejoin="miter"/></svg>
<span class="t lt" style="top:1238.58px;font-size:24px;left:53.20px;">Favorite Racer</span>
<svg class="abs" style="left:19.4px;top:1270.5px" width="25.4" height="25.4" viewBox="0 0 25 25"><circle cx="12.5" cy="12.5" r="12.3" fill="#3a3a44"/><path d="M12.5 6.3v12.4M6.3 12.5h12.4" stroke="#fff" stroke-width="2.2"/></svg>
<span class="t lt" style="top:1275.08px;font-size:24px;left:54.50px;">Athlete Biography</span>
<svg class="abs" style="left:16.5px;top:1303.7px" width="61" height="31" viewBox="0 0 61 31"><rect x="0.5" y="0.5" width="60" height="30" rx="15" fill="#3a8526"/><circle cx="45.5" cy="15.5" r="13.5" fill="#fff"/><path d="M9 13.5l6 6 10-10" fill="none" stroke="#fff" stroke-width="4"/></svg>
<span class="t lt" style="top:1311.08px;font-size:24px;left:83.80px;">Difference from the leader</span>
<span class="t gry" style="top:1151.73px;font-size:23px;right:1245.00px;">Run 1</span>
<span class="t gry" style="top:1192.93px;font-size:23px;right:1245.00px;">Run 2</span>
<span class="t lt" style="top:1232.78px;font-size:24px;right:1243.70px;">Total</span>
<svg class="abs" style="left:463px;top:1224px" width="11" height="42" viewBox="0 0 11 42"><rect x="0" y="0" width="3.4" height="41" fill="#14298c"/><path d="M3 13.5L10 20.5L3 27.5Z" fill="#14298c"/></svg>
<span class="t b w" style="top:1025.38px;font-size:22px;right:771.00px;">Time</span>
<span class="t b w" style="top:1025.38px;font-size:22px;right:622.00px;">Diff</span>
<span class="t b w" style="top:1025.38px;font-size:22px;left:1006.00px;width:300px;text-align:center;">Rank</span>
<span class="t b w" style="top:1025.38px;font-size:22px;right:317.50px;">Sector</span>
<span class="t b w" style="top:1025.38px;font-size:22px;right:169.50px;">Diff</span>
<span class="t b w" style="top:1025.38px;font-size:22px;left:1459.00px;width:300px;text-align:center;">Rank</span>
<div class="abs" style="left:771px;top:1062px;width:911px;height:335px;background:#fdfdfd"></div>
<span class="t b w" style="top:1076.62px;font-size:21px;left:569.70px;">Run 1</span>
<span class="t b w" style="top:1243.98px;font-size:21px;left:569.70px;">Run 2</span>
<div class="abs" style="left:771px;top:1062px;width:911px;height:42px;background:#f8f8f8"></div>
<div class="abs" style="left:771px;top:1103px;width:911px;height:1px;background:#e7e7e7"></div>
<svg class="abs" style="left:690px;top:1068.90px" width="24" height="30" viewBox="0 0 24 30"><rect x="7.6" y="0" width="8" height="3" fill="#fff"/><circle cx="11.6" cy="15.4" r="11.2" fill="#fff"/><path d="M18.4 8l2.6-2.8" stroke="#fff" stroke-width="2.2"/><rect x="10.2" y="9" width="2.8" height="8" fill="#a5a5a5"/></svg>
<span class="t b w" style="top:1085.56px;font-size:16px;left:715.30px;">1</span>
<span class="t " style="top:1072.18px;font-size:22px;right:771.70px;">12.48</span>
<span class="t grn" style="top:1072.18px;font-size:22px;right:623.50px;">-0.07</span>
<span class="t " style="top:1072.18px;font-size:22px;left:1005.50px;width:300px;text-align:center;">3</span>
<span class="t " style="top:1072.18px;font-size:22px;right:318.50px;">12.48</span>
<span class="t grn" style="top:1072.18px;font-size:22px;right:170.50px;">-0.07</span>
<span class="t " style="top:1072.18px;font-size:22px;left:1459.00px;width:300px;text-align:center;">3</span>
<div class="abs" style="left:771px;top:1144px;width:911px;height:1px;background:#e7e7e7"></div>
<svg class="abs" style="left:690px;top:1110.74px" width="24" height="30" viewBox="0 0 24 30"><rect x="7.6" y="0" width="8" height="3" fill="#fff"/><circle cx="11.6" cy="15.4" r="11.2" fill="#fff"/><path d="M18.4 8l2.6-2.8" stroke="#fff" stroke-width="2.2"/><rect x="10.2" y="9" width="2.8" height="8" fill="#a5a5a5"/></svg>
<span class="t b w" style="top:1127.40px;font-size:16px;left:715.30px;">2</span>
<span class="t " style="top:1114.02px;font-size:22px;right:771.70px;">24.35</span>
<span class="t grn" style="top:1114.02px;font-size:22px;right:623.50px;">-0.05</span>
<span class="t " style="top:1114.02px;font-size:22px;left:1005.50px;width:300px;text-align:center;">2</span>
<span class="t " style="top:1114.02px;font-size:22px;right:318.50px;">11.87</span>
<span class="t red" style="top:1114.02px;font-size:22px;right:170.50px;">+0.02</span>
<span class="t " style="top:1114.02px;font-size:22px;left:1459.00px;width:300px;text-align:center;">4</span>
<div class="abs" style="left:771px;top:1145px;width:911px;height:42px;background:#f8f8f8"></div>
<div class="abs" style="left:771px;top:1186px;width:911px;height:1px;background:#e7e7e7"></div>
<svg class="abs" style="left:690px;top:1152.58px" width="24" height="30" viewBox="0 0 24 30"><rect x="7.6" y="0" width="8" height="3" fill="#fff"/><circle cx="11.6" cy="15.4" r="11.2" fill="#fff"/><path d="M18.4 8l2.6-2.8" stroke="#fff" stroke-width="2.2"/><rect x="10.2" y="9" width="2.8" height="8" fill="#a5a5a5"/></svg>
<span class="t b w" style="top:1169.24px;font-size:16px;left:715.30px;">3</span>
<span class="t " style="top:1155.86px;font-size:22px;right:771.70px;">36.41</span>
<span class="t red" style="top:1155.86px;font-size:22px;right:623.50px;">+0.25</span>
<span class="t " style="top:1155.86px;font-size:22px;left:1005.50px;width:300px;text-align:center;">3</span>
<span class="t " style="top:1155.86px;font-size:22px;right:318.50px;">12.06</span>
<span class="t red" style="top:1155.86px;font-size:22px;right:170.50px;">+0.30</span>
<span class="t " style="top:1155.86px;font-size:22px;left:1459.00px;width:300px;text-align:center;">5</span>
<div class="abs" style="left:771px;top:1228px;width:911px;height:1px;background:#e7e7e7"></div>
<svg class="abs" style="left:695px;top:1196.12px" width="23.2" height="26.1" viewBox="0 0 24 27"><path d="M0 0H14.5V3H23.5V18.5H12V15.5H3.5V26.5H0Z" fill="#fff"/></svg>
<span class="t " style="top:1197.70px;font-size:22px;right:771.70px;">51.16</span>
<span class="t red" style="top:1197.70px;font-size:22px;right:623.50px;">+0.34</span>
<span class="t " style="top:1197.70px;font-size:22px;left:1005.50px;width:300px;text-align:center;">4</span>
<span class="t " style="top:1197.70px;font-size:22px;right:318.50px;">14.75</span>
<span class="t red" style="top:1197.70px;font-size:22px;right:170.50px;">+0.09</span>
<span class="t " style="top:1197.70px;font-size:22px;left:1459.00px;width:300px;text-align:center;">5</span>
<div class="abs" style="left:771px;top:1229px;width:911px;height:42px;background:#f8f8f8"></div>
<div class="abs" style="left:771px;top:1270px;width:911px;height:1px;background:#e7e7e7"></div>
<svg class="abs" style="left:690px;top:1236.26px" width="24" height="30" viewBox="0 0 24 30"><rect x="7.6" y="0" width="8" height="3" fill="#fff"/><circle cx="11.6" cy="15.4" r="11.2" fill="#fff"/><path d="M18.4 8l2.6-2.8" stroke="#fff" stroke-width="2.2"/><rect x="10.2" y="9" width="2.8" height="8" fill="#a5a5a5"/></svg>
<span class="t b w" style="top:1252.92px;font-size:16px;left:715.30px;">1</span>
<span class="t " style="top:1239.54px;font-size:22px;right:771.70px;">1:03.68</span>
<span class="t red" style="top:1239.54px;font-size:22px;right:623.50px;">+0.42</span>
<span class="t " style="top:1239.54px;font-size:22px;left:1005.50px;width:300px;text-align:center;">4</span>
<span class="t " style="top:1239.54px;font-size:22px;right:318.50px;">12.52</span>
<span class="t red" style="top:1239.54px;font-size:22px;right:170.50px;">+0.08</span>
<span class="t " style="top:1239.54px;font-size:22px;left:1459.00px;width:300px;text-align:center;">8</span>
<div class="abs" style="left:771px;top:1312px;width:911px;height:1px;background:#e7e7e7"></div>
<svg class="abs" style="left:690px;top:1278.10px" width="24" height="30" viewBox="0 0 24 30"><rect x="7.6" y="0" width="8" height="3" fill="#fff"/><circle cx="11.6" cy="15.4" r="11.2" fill="#fff"/><path d="M18.4 8l2.6-2.8" stroke="#fff" stroke-width="2.2"/><rect x="10.2" y="9" width="2.8" height="8" fill="#a5a5a5"/></svg>
<span class="t b w" style="top:1294.76px;font-size:16px;left:715.30px;">2</span>
<span class="t " style="top:1281.38px;font-size:22px;right:771.70px;">1:15.58</span>
<span class="t red" style="top:1281.38px;font-size:22px;right:623.50px;">+0.80</span>
<span class="t " style="top:1281.38px;font-size:22px;left:1005.50px;width:300px;text-align:center;">3</span>
<span class="t " style="top:1281.38px;font-size:22px;right:318.50px;">11.90</span>
<span class="t red" style="top:1281.38px;font-size:22px;right:170.50px;">+0.38</span>
<span class="t " style="top:1281.38px;font-size:22px;left:1459.00px;width:300px;text-align:center;">12</span>
<div class="abs" style="left:771px;top:1313px;width:911px;height:42px;background:#f8f8f8"></div>
<div class="abs" style="left:771px;top:1354px;width:911px;height:1px;background:#e7e7e7"></div>
<svg class="abs" style="left:690px;top:1319.94px" width="24" height="30" viewBox="0 0 24 30"><rect x="7.6" y="0" width="8" height="3" fill="#fff"/><circle cx="11.6" cy="15.4" r="11.2" fill="#fff"/><path d="M18.4 8l2.6-2.8" stroke="#fff" stroke-width="2.2"/><rect x="10.2" y="9" width="2.8" height="8" fill="#a5a5a5"/></svg>
<span class="t b w" style="top:1336.60px;font-size:16px;left:715.30px;">3</span>
<span class="t " style="top:1323.22px;font-size:22px;right:771.70px;">1:27.39</span>
<span class="t red" style="top:1323.22px;font-size:22px;right:623.50px;">+1.24</span>
<span class="t " style="top:1323.22px;font-size:22px;left:1005.50px;width:300px;text-align:center;">3</span>
<span class="t " style="top:1323.22px;font-size:22px;right:318.50px;">11.81</span>
<span class="t red" style="top:1323.22px;font-size:22px;right:170.50px;">+0.44</span>
<span class="t " style="top:1323.22px;font-size:22px;left:1459.00px;width:300px;text-align:center;">11</span>
<svg class="abs" style="left:695px;top:1363.48px" width="23.2" height="26.1" viewBox="0 0 24 27"><path d="M0 0H14.5V3H23.5V18.5H12V15.5H3.5V26.5H0Z" fill="#fff"/></svg>
<span class="t " style="top:1365.06px;font-size:22px;right:771.70px;">1:40.81</span>
<span class="t red" style="top:1365.06px;font-size:22px;right:623.50px;">+1.19</span>
<span class="t " style="top:1365.06px;font-size:22px;left:1005.50px;width:300px;text-align:center;">3</span>
<span class="t " style="top:1365.06px;font-size:22px;right:318.50px;">13.42</span>
<span class="t grn" style="top:1365.06px;font-size:22px;right:170.50px;">-0.05</span>
<span class="t " style="top:1365.06px;font-size:22px;left:1459.00px;width:300px;text-align:center;">4</span>
<div class="abs" style="left:935px;top:1062px;width:1px;height:335px;background:#e3e3e3"></div>
<div class="abs" style="left:1083px;top:1062px;width:1px;height:335px;background:#e3e3e3"></div>
<div class="abs" style="left:1228px;top:1062px;width:1px;height:335px;background:#e3e3e3"></div>
<div class="abs" style="left:1388px;top:1062px;width:1px;height:335px;background:#e3e3e3"></div>
<div class="abs" style="left:1536px;top:1062px;width:1px;height:335px;background:#e3e3e3"></div>
<div class="abs" style="left:936.0px;top:1093.80px;width:1.0px;height:5.8px;background:#358a25"></div>
<div class="abs" style="left:1389.0px;top:1093.80px;width:1.0px;height:5.8px;background:#358a25"></div>
<div class="abs" style="left:936.0px;top:1135.64px;width:1.0px;height:5.8px;background:#358a25"></div>
<div class="abs" style="left:1387.3px;top:1135.64px;width:1.0px;height:5.8px;background:#e62e22"></div>
<div class="abs" style="left:933.1px;top:1177.48px;width:2.1px;height:5.8px;background:#e62e22"></div>
<div class="abs" style="left:1385.7px;top:1177.48px;width:2.6px;height:5.8px;background:#e62e22"></div>
<div class="abs" style="left:932.4px;top:1219.32px;width:2.9px;height:5.8px;background:#e62e22"></div>
<div class="abs" style="left:1387.3px;top:1219.32px;width:1.0px;height:5.8px;background:#e62e22"></div>
<div class="abs" style="left:931.7px;top:1261.16px;width:3.6px;height:5.8px;background:#e62e22"></div>
<div class="abs" style="left:1387.3px;top:1261.16px;width:1.0px;height:5.8px;background:#e62e22"></div>
<div class="abs" style="left:928.4px;top:1303.00px;width:6.9px;height:5.8px;background:#e62e22"></div>
<div class="abs" style="left:1385.0px;top:1303.00px;width:3.3px;height:5.8px;background:#e62e22"></div>
<div class="abs" style="left:925.3px;top:1344.84px;width:10.0px;height:5.8px;background:#e62e22"></div>
<div class="abs" style="left:1384.5px;top:1344.84px;width:3.8px;height:5.8px;background:#e62e22"></div>
<div class="abs" style="left:925.3px;top:1386.68px;width:10.0px;height:5.8px;background:#e62e22"></div>
<div class="abs" style="left:1389.0px;top:1386.68px;width:1.0px;height:5.8px;background:#358a25"></div>
<div class="abs" style="left:0;top:1330px;width:1694px;height:78px;background:linear-gradient(rgba(0,0,0,0),rgba(0,0,0,0.04))"></div>
</body></html>
